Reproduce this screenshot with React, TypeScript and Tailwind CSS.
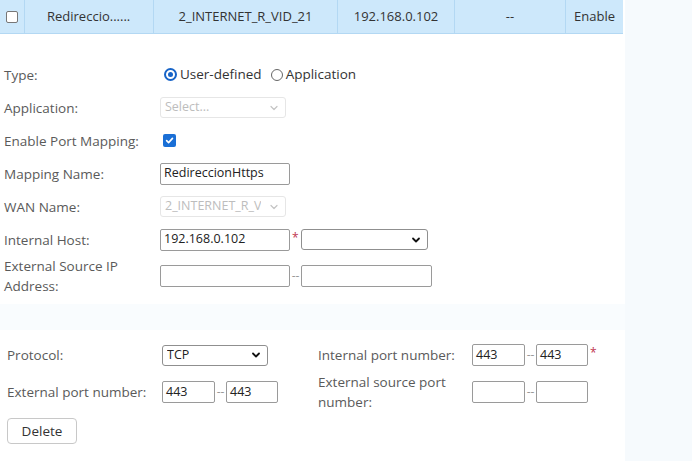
import React from "react";

const Chevron = ({ light = false }: { light?: boolean }) => (
  <svg width="10" height="10" viewBox="0 0 10 10" className="shrink-0">
    <path
      d="M2 3.5 L5 6.5 L8 3.5"
      fill="none"
      stroke={light ? "#c4c4c4" : "#111"}
      strokeWidth={light ? 1.2 : 1.8}
      strokeLinecap="round"
      strokeLinejoin="round"
    />
  </svg>
);

const Select = ({
  value,
  width,
  disabled = false,
}: {
  value: string;
  width: string;
  disabled?: boolean;
}) => (
  <div
    className={`flex h-[21px] items-center justify-between rounded-[3px] border pl-[4px] pr-[6px] text-[12.5px] ${width} ${
      disabled ? "border-[#e6e6e6] text-[#bdbdbd]" : "border-[#8f8f8f] text-[#222]"
    }`}
  >
    <span className="truncate">{value}</span>
    <Chevron light={disabled} />
  </div>
);

const Input = ({ value = "", width }: { value?: string; width: string }) => (
  <div
    className={`flex h-[22px] items-center rounded-[2px] border border-[#9a9a9a] px-[3px] text-[12.5px] text-[#222] ${width}`}
  >
    {value}
  </div>
);

const Dash = () => <span className="w-[11px] text-center text-[12px] text-[#999]">--</span>;
const Star = () => <span className="ml-[2px] self-start text-[12px] text-[#c0344f]">*</span>;

const Radio = ({ checked, label }: { checked: boolean; label: string }) => (
  <span className="flex items-center gap-[3px]">
    {checked ? (
      <span className="flex h-[13px] w-[13px] items-center justify-center rounded-full border-2 border-[#1764c8]">
        <span className="h-[5px] w-[5px] rounded-full bg-[#1764c8]" />
      </span>
    ) : (
      <span className="h-[12px] w-[12px] rounded-full border border-[#666]" />
    )}
    <span className="text-[#333]">{label}</span>
  </span>
);

const Row = ({
  label,
  children,
  tall = false,
}: {
  label: React.ReactNode;
  children?: React.ReactNode;
  tall?: boolean;
}) => (
  <div className={`flex items-center ${tall ? "h-[40px]" : "h-[33px]"}`}>
    <div className="w-[160px] pl-[4px] leading-[20px]">{label}</div>
    <div className="flex items-center">{children}</div>
  </div>
);

export default function App() {
  const cols = [
    { w: "w-[129px]", text: "Redireccio......", cls: "pl-[22px]" },
    { w: "w-[184px]", text: "2_INTERNET_R_VID_21", cls: "justify-center" },
    { w: "w-[117px]", text: "192.168.0.102", cls: "justify-center" },
    { w: "w-[111px]", text: "--", cls: "justify-center" },
    { w: "w-[57px]", text: "Enable", cls: "justify-center" },
  ];

  return (
    <div className="h-[461px] w-[692px] overflow-hidden bg-[#f6fafd] font-['Open_Sans',sans-serif] text-[13.5px] text-[#5a5a5a]">
      <div className="w-[625px] bg-white">
        {/* table row */}
        <div className="flex h-[34px] w-[623px] border-b border-[#b3d8f3] bg-[#cde8fb] text-[13px] text-[#333]">
          <div className="flex w-[25px] items-center justify-center border-r border-[#b3d8f3]">
            <span className="h-[12px] w-[12px] rounded-[2px] border border-[#777] bg-white" />
          </div>
          {cols.map((c, i) => (
            <div
              key={i}
              className={`flex items-center ${c.w} ${c.cls} ${
                i < cols.length - 1 ? "border-r border-[#b3d8f3]" : ""
              }`}
            >
              {c.text}
            </div>
          ))}
        </div>

        {/* general form */}
        <div className="pb-[8px] pt-[24px]">
          <Row label="Type:">
            <span className="ml-[4px] flex items-center gap-[9px]">
              <Radio checked label="User-defined" />
              <Radio checked={false} label="Application" />
            </span>
          </Row>
          <Row label="Application:">
            <Select value="Select..." width="w-[126px]" disabled />
          </Row>
          <Row label="Enable Port Mapping:">
            <span className="ml-[3px] flex h-[13px] w-[13px] items-center justify-center rounded-[2px] bg-[#1a6fd6]">
              <svg width="9" height="9" viewBox="0 0 10 10">
                <path
                  d="M1.8 5.2 L4 7.4 L8.3 2.6"
                  fill="none"
                  stroke="#fff"
                  strokeWidth="1.8"
                  strokeLinecap="round"
                  strokeLinejoin="round"
                />
              </svg>
            </span>
          </Row>
          <Row label="Mapping Name:">
            <Input value="RedireccionHttps" width="w-[130px]" />
          </Row>
          <Row label="WAN Name:">
            <Select value="2_INTERNET_R_V" width="w-[126px]" disabled />
          </Row>
          <Row label="Internal Host:">
            <Input value="192.168.0.102" width="w-[130px]" />
            <Star />
            <span className="ml-[2px]">
              <Select value="" width="w-[127px]" />
            </span>
          </Row>
          <Row
            tall
            label={
              <>
                External Source IP
                <br />
                Address:
              </>
            }
          >
            <Input width="w-[130px]" />
            <Dash />
            <Input width="w-[131px]" />
          </Row>
        </div>
      </div>

      {/* band between panels */}
      <div className="h-[26px] w-[625px] bg-[#f9fcfe]" />

      {/* port settings */}
      <div className="w-[625px] bg-white pl-[7px] pt-[9px]">
        <div className="grid grid-cols-[155px_156px_154px_auto] items-center">
          <div className="flex h-[32px] items-center">Protocol:</div>
          <div>
            <Select value="TCP" width="w-[106px]" />
          </div>
          <div>Internal port number:</div>
          <div className="flex items-center">
            <Input value="443" width="w-[53px]" />
            <Dash />
            <Input value="443" width="w-[52px]" />
            <Star />
          </div>

          <div className="flex h-[42px] items-center">External port number:</div>
          <div className="flex items-center">
            <Input value="443" width="w-[53px]" />
            <Dash />
            <Input value="443" width="w-[52px]" />
          </div>
          <div className="leading-[20px]">
            External source port
            <br />
            number:
          </div>
          <div className="flex items-center">
            <Input width="w-[53px]" />
            <Dash />
            <Input width="w-[52px]" />
          </div>
        </div>
        <div className="pb-[18px] pt-[4px]">
          <button className="mt-[1px] h-[26px] w-[70px] rounded-[4px] border border-[#c8c8c8] bg-white text-[13.5px] text-[#333]">
            Delete
          </button>
        </div>
      </div>
    </div>
  );
}
